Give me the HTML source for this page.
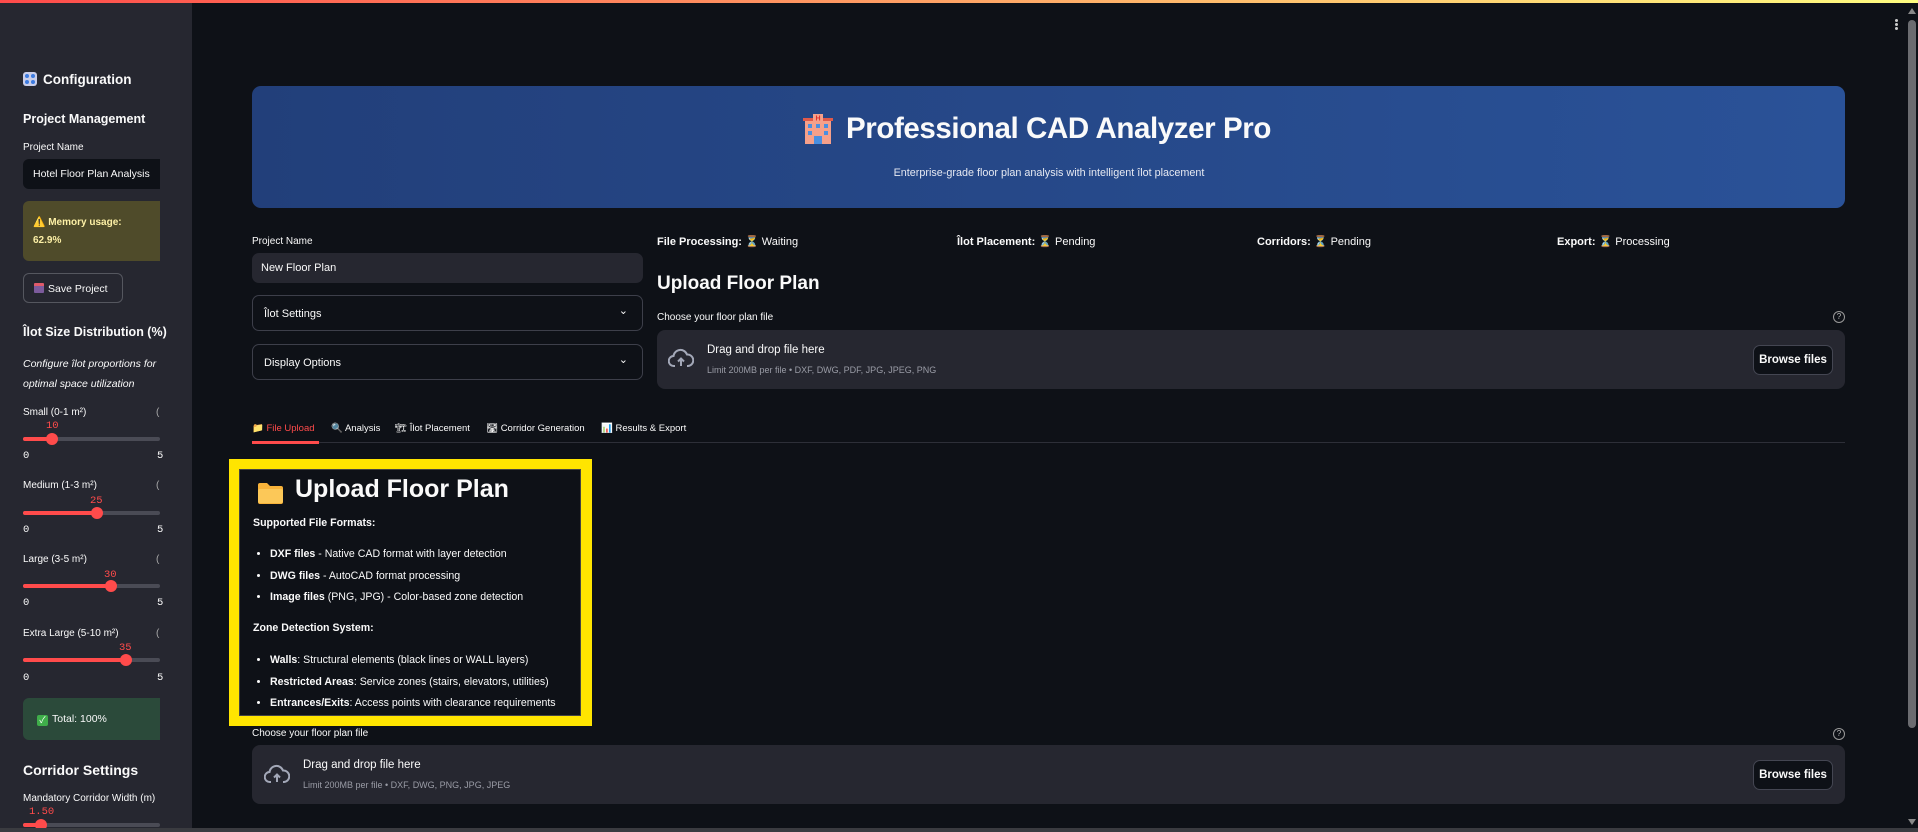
<!DOCTYPE html>
<html><head><meta charset="utf-8"><style>
*{margin:0;padding:0;box-sizing:border-box}
body{width:1918px;height:832px;overflow:hidden;background:#0e1117;font-family:"Liberation Sans","Noto Sans CJK JP",sans-serif;color:#fafafa;position:relative}
.a{position:absolute;white-space:nowrap}
.topbar{position:absolute;left:0;top:0;width:1918px;height:3px;background:linear-gradient(90deg,#ff4b4b,#fffd80)}
.side{position:absolute;left:0;top:3px;width:192px;height:825px;background:#262730;overflow:hidden}
.lbl{font-size:10px;color:#fafafa}
.track{position:absolute;left:23px;width:137px;height:4px;background:#4a4b55;border-radius:2px}
.fill{position:absolute;left:0;top:0;height:4px;background:#ff4b4b;border-radius:2px}
.thumb{position:absolute;top:-4px;width:12px;height:12px;border-radius:50%;background:#ff4b4b;margin-left:-6px}
.val{font-family:"Liberation Mono",monospace;font-size:10.5px;color:#ff4b4b}
.mono{font-family:"Liberation Mono",monospace;font-size:10.5px;color:#fafafa}
.exp{position:absolute;left:252px;width:391px;border:1px solid #3d3f4a;border-radius:7px;font-size:11px}
.drop{position:absolute;background:#262730;border-radius:8px}
.btn{position:absolute;border:1px solid #444652;border-radius:7px;background:#0e1117;font-size:11.5px;font-weight:bold;text-align:center}
.st{font-size:11px}
.box li{list-style:disc;margin-left:17px;padding-left:0;height:21.5px;font-size:10.6px}
.tab{position:absolute;top:423px;font-size:9.5px;white-space:nowrap}
</style></head><body>
<div class="topbar"></div>
<div class="side">
 <div class="a" style="left:23px;top:69px;font-size:13.5px;font-weight:bold"><span style="display:inline-block;width:14px;height:14px;background:#c9cde8;border-radius:3px;vertical-align:-2px;margin-right:6px;position:relative"><span style="position:absolute;left:2px;top:2px;width:4px;height:4px;background:#3d7be0;border-radius:50%;box-shadow:6px 0 #3d7be0,0 6px #3d7be0,6px 6px #3d7be0"></span></span>Configuration</div>
 <div class="a" style="left:23px;top:109px;font-size:12.5px;font-weight:bold">Project Management</div>
 <div class="a lbl" style="left:23px;top:139px">Project Name</div>
 <div class="a" style="left:23px;top:156px;width:137px;height:30px;background:#0e1117;border-radius:6px 0 0 6px;font-size:10.5px;padding:9px 0 0 10px;overflow:hidden">Hotel Floor Plan Analysis</div>
 <div class="a" style="left:23px;top:198px;width:137px;height:60px;background:#4f4b2a;border-radius:6px 0 0 6px;font-size:10px;color:#fdf0a6;font-weight:bold;padding:13px 0 0 10px;line-height:18px">⚠️ Memory usage:<br>62.9%</div>
 <div class="a" style="left:23px;top:270px;width:100px;height:30px;border:1px solid #55575f;border-radius:6px;font-size:10.5px;padding:9px 0 0 10px"><span style="display:inline-block;width:10px;height:10px;background:#7c5b9c;border-radius:1px;vertical-align:-1px;margin-right:4px;border-top:3px solid #e05a6a"></span>Save Project</div>
 <div class="a" style="left:23px;top:322px;font-size:12.5px;font-weight:bold">Îlot Size Distribution (%)</div>
 <div class="a" style="left:23px;top:351px;font-size:10.5px;font-style:italic;line-height:20px">Configure îlot proportions for<br>optimal space utilization</div>

 <div class="a lbl" style="left:23px;top:404px">Small (0-1 m²)</div><div class="a lbl" style="left:156px;top:404px;color:#aaa">(</div>
 <div class="a val" style="left:46px;top:417px">10</div>
 <div class="track" style="top:434px"><div class="fill" style="width:29px"></div><div class="thumb" style="left:29px"></div></div>
 <div class="a mono" style="left:23px;top:447px">0</div><div class="a mono" style="left:157px;top:447px">5</div>

 <div class="a lbl" style="left:23px;top:477px">Medium (1-3 m²)</div><div class="a lbl" style="left:156px;top:477px;color:#aaa">(</div>
 <div class="a val" style="left:90px;top:492px">25</div>
 <div class="track" style="top:508px"><div class="fill" style="width:74px"></div><div class="thumb" style="left:74px"></div></div>
 <div class="a mono" style="left:23px;top:521px">0</div><div class="a mono" style="left:157px;top:521px">5</div>

 <div class="a lbl" style="left:23px;top:551px">Large (3-5 m²)</div><div class="a lbl" style="left:156px;top:551px;color:#aaa">(</div>
 <div class="a val" style="left:104px;top:566px">30</div>
 <div class="track" style="top:581px"><div class="fill" style="width:88px"></div><div class="thumb" style="left:88px"></div></div>
 <div class="a mono" style="left:23px;top:594px">0</div><div class="a mono" style="left:157px;top:594px">5</div>

 <div class="a lbl" style="left:23px;top:625px">Extra Large (5-10 m²)</div><div class="a lbl" style="left:156px;top:625px;color:#aaa">(</div>
 <div class="a val" style="left:119px;top:639px">35</div>
 <div class="track" style="top:655px"><div class="fill" style="width:103px"></div><div class="thumb" style="left:103px"></div></div>
 <div class="a mono" style="left:23px;top:669px">0</div><div class="a mono" style="left:157px;top:669px">5</div>

 <div class="a" style="left:23px;top:695px;width:137px;height:42px;background:#2b4a3a;border-radius:6px 0 0 6px;font-size:10.5px;padding:15px 0 0 14px"><span style="display:inline-block;width:11px;height:11px;background:#3fae4a;border-radius:2px;vertical-align:-1px;margin-right:4px;color:#fff;font-size:9px;line-height:11px;text-align:center">✓</span>Total: 100%</div>
 <div class="a" style="left:23px;top:759px;font-size:14px;font-weight:bold">Corridor Settings</div>
 <div class="a lbl" style="left:23px;top:790px">Mandatory Corridor Width (m)</div>
 <div class="a val" style="left:29px;top:803px">1.50</div>
 <div class="track" style="top:820px"><div class="fill" style="width:18px"></div><div class="thumb" style="left:18px"></div></div>
</div>

<!-- banner -->
<div class="a" style="left:252px;top:86px;width:1593px;height:122px;border-radius:9px;background:linear-gradient(90deg,#223f7a,#2a5298)"></div>
<div class="a" style="left:802px;top:114px;width:32px;height:30px"><svg width="32" height="30" viewBox="0 0 32 30"><rect x="3" y="6" width="26" height="24" fill="#f6a08a"/><rect x="1" y="4" width="30" height="3" fill="#e05a4a"/><rect x="11" y="0" width="10" height="7" fill="#f6a08a"/><text x="16" y="6.5" font-size="7" fill="#e0302a" text-anchor="middle" font-family="Liberation Sans" font-weight="bold">H</text><g fill="#4a8fe0"><rect x="6" y="10" width="4" height="4"/><rect x="14" y="10" width="4" height="4"/><rect x="22" y="10" width="4" height="4"/><rect x="6" y="17" width="4" height="4"/><rect x="22" y="17" width="4" height="4"/><rect x="12" y="22" width="8" height="8"/></g></svg></div>
<div class="a" style="left:846px;top:112px;font-size:29.5px;font-weight:bold;letter-spacing:-0.4px">Professional CAD Analyzer Pro</div>
<div class="a" style="left:0;width:2098px;text-align:center;top:167px;font-size:10.8px;color:#e6e9f2">Enterprise-grade floor plan analysis with intelligent îlot placement</div>

<!-- left column -->
<div class="a lbl" style="left:252px;top:236px">Project Name</div>
<div class="a" style="left:252px;top:253px;width:391px;height:30px;background:#262730;border-radius:7px;font-size:11px;padding:9px 0 0 9px">New Floor Plan</div>
<div class="exp" style="top:295px;height:36px;padding:12px 0 0 11px">Îlot Settings<span class="a" style="right:14px;top:8px;font-size:11px">⌄</span></div>
<div class="exp" style="top:344px;height:36px;padding:12px 0 0 11px">Display Options<span class="a" style="right:14px;top:8px;font-size:11px">⌄</span></div>

<!-- status row -->
<div class="a st" style="left:657px;top:235px"><b>File Processing:</b> ⏳ Waiting</div>
<div class="a st" style="left:957px;top:235px"><b>Îlot Placement:</b> ⏳ Pending</div>
<div class="a st" style="left:1257px;top:235px"><b>Corridors:</b> ⏳ Pending</div>
<div class="a st" style="left:1557px;top:235px"><b>Export:</b> ⏳ Processing</div>

<div class="a" style="left:657px;top:273px;font-size:19px;font-weight:bold">Upload Floor Plan</div>
<div class="a lbl" style="left:657px;top:312px">Choose your floor plan file</div>
<div class="a" style="left:1833px;top:311px;width:12px;height:12px;border:1px solid #999;border-radius:50%;font-size:8px;color:#bbb;text-align:center;line-height:10px">?</div>
<div class="drop" style="left:657px;top:330px;width:1188px;height:59px"></div>
<svg class="a" style="left:668px;top:347px" width="26" height="22" viewBox="0 0 26 22"><path d="M7 19H6a5 5 0 0 1-.5-10A7 7 0 0 1 19 7.5 5.5 5.5 0 0 1 20 19h-1" fill="none" stroke="#a3a8b8" stroke-width="2"/><path d="M13 19v-7M10 14.5l3-3 3 3" fill="none" stroke="#a3a8b8" stroke-width="2"/></svg>
<div class="a" style="left:707px;top:344px;font-size:11.5px">Drag and drop file here</div>
<div class="a" style="left:707px;top:365px;font-size:9px;color:#9a9ca6">Limit 200MB per file • DXF, DWG, PDF, JPG, JPEG, PNG</div>
<div class="btn" style="left:1753px;top:345px;width:80px;height:30px;line-height:28px">Browse files</div>

<!-- tabs -->
<div class="a" style="left:252px;top:442px;width:1593px;height:1px;background:#2d2f38"></div>
<div class="a" style="left:252px;top:441px;width:67px;height:3px;background:#ff4b4b"></div>
<div class="tab" style="left:252px;color:#ff4b4b">📁 File Upload</div>
<div class="tab" style="left:331px">🔍 Analysis</div>
<div class="tab" style="left:395px">🏗 Îlot Placement</div>
<div class="tab" style="left:486px">🛣 Corridor Generation</div>
<div class="tab" style="left:601px">📊 Results &amp; Export</div>

<!-- yellow box -->
<div class="a" style="left:229px;top:459px;width:363px;height:267px;background:#ffe500"></div>
<div class="a box" style="left:239px;top:469px;width:342px;height:247px;background:#0e1117;border:1px solid #444">
 <div class="a" style="left:17px;top:12px;width:27px;height:22px"><svg width="27" height="22"><path d="M1 3a2 2 0 0 1 2-2h7l3 3h11a2 2 0 0 1 2 2v14a2 2 0 0 1-2 2H3a2 2 0 0 1-2-2z" fill="#f8b33a"/><rect x="1" y="7" width="25" height="14" rx="2" fill="#fcc858"/></svg></div>
 <div class="a" style="left:55px;top:5px;font-size:25px;font-weight:bold">Upload Floor Plan</div>
 <div class="a" style="left:13px;top:47px;font-size:10.6px;font-weight:bold">Supported File Formats:</div>
 <ul class="a" style="left:13px;top:78px">
  <li><b>DXF files</b> - Native CAD format with layer detection</li>
  <li><b>DWG files</b> - AutoCAD format processing</li>
  <li><b>Image files</b> (PNG, JPG) - Color-based zone detection</li>
 </ul>
 <div class="a" style="left:13px;top:152px;font-size:10.6px;font-weight:bold">Zone Detection System:</div>
 <ul class="a" style="left:13px;top:184px">
  <li><b>Walls</b>: Structural elements (black lines or WALL layers)</li>
  <li><b>Restricted Areas</b>: Service zones (stairs, elevators, utilities)</li>
  <li><b>Entrances/Exits</b>: Access points with clearance requirements</li>
 </ul>
</div>

<!-- bottom uploader -->
<div class="a lbl" style="left:252px;top:728px">Choose your floor plan file</div>
<div class="a" style="left:1833px;top:728px;width:12px;height:12px;border:1px solid #999;border-radius:50%;font-size:8px;color:#bbb;text-align:center;line-height:10px">?</div>
<div class="drop" style="left:252px;top:745px;width:1593px;height:59px"></div>
<svg class="a" style="left:264px;top:763px" width="26" height="22" viewBox="0 0 26 22"><path d="M7 19H6a5 5 0 0 1-.5-10A7 7 0 0 1 19 7.5 5.5 5.5 0 0 1 20 19h-1" fill="none" stroke="#a3a8b8" stroke-width="2"/><path d="M13 19v-7M10 14.5l3-3 3 3" fill="none" stroke="#a3a8b8" stroke-width="2"/></svg>
<div class="a" style="left:303px;top:759px;font-size:11.5px">Drag and drop file here</div>
<div class="a" style="left:303px;top:780px;font-size:9px;color:#9a9ca6">Limit 200MB per file • DXF, DWG, PNG, JPG, JPEG</div>
<div class="btn" style="left:1753px;top:760px;width:80px;height:30px;line-height:28px">Browse files</div>

<!-- menu & scrollbar -->
<div class="a" style="left:1895px;top:19px;width:3px;height:3px;background:#ccc;border-radius:50%;box-shadow:0 4px #ccc,0 8px #ccc"></div>
<div class="a" style="left:1908px;top:8px;width:0;height:0;border-left:4px solid transparent;border-right:4px solid transparent;border-bottom:6px solid #888"></div>
<div class="a" style="left:1908px;top:20px;width:8px;height:708px;background:#6b6c70;border-radius:4px"></div>
<div class="a" style="left:1908px;top:819px;width:0;height:0;border-left:4px solid transparent;border-right:4px solid transparent;border-top:6px solid #888"></div>
<div class="a" style="left:0;top:828px;width:1918px;height:4px;background:#3a3b40"></div>
</body></html>
